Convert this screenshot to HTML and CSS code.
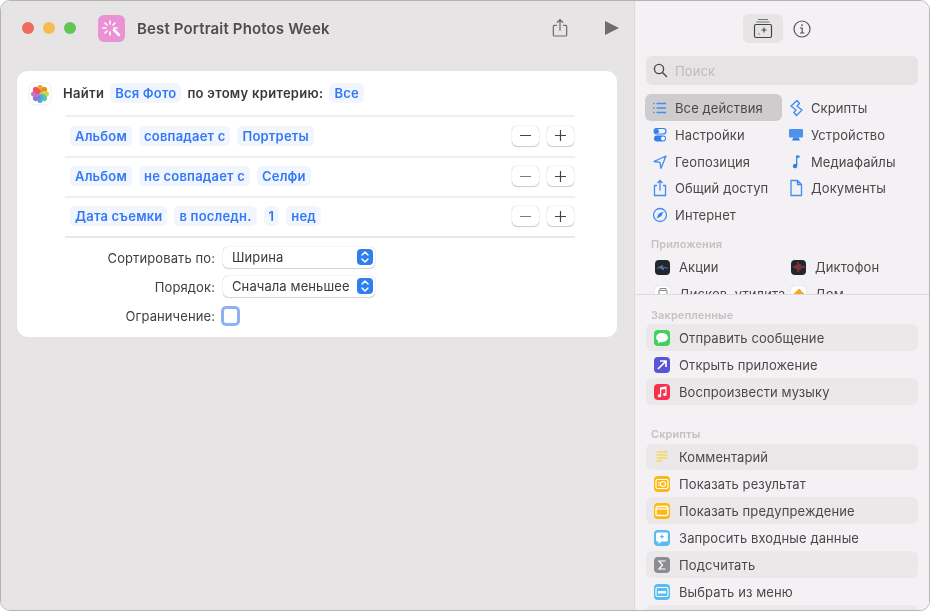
FILE: index.html
```html
<!DOCTYPE html><html lang="en">
<head>
  <meta charset="UTF-8">
  <meta name="viewport" content="width=device-width, initial-scale=1.0">
  <title>Best Portrait Photos Week</title>
  <link rel="stylesheet" href="styles.css">
</head>
<body>
  <div class="window">
    <div class="main">
      <div class="titlebar">
        <span class="light red"></span><span class="light yellow"></span><span class="light green"></span>
        <span class="app-icon">
          <svg width="27" height="27" viewBox="0 0 27 27" fill="none" stroke="#fff" stroke-width="1.6" stroke-linecap="round"><path d="M12 6v3M12 17v3M5 13h3M16 13h3M7 8l2 2M17 8l-2 2M7 18l2-2"/><path d="M16 15l5 5" stroke-width="2.6"/></svg>
        </span>
        <span class="doc-title">Best Portrait Photos Week</span>
        <span class="share">
          <svg width="16" height="20" viewBox="0 0 18 22" fill="none" stroke="#6f6d6e" stroke-width="1.4"><path d="M5.500 8H2.500a1 1 0 0 0-1 1v10a1 1 0 0 0 1 1h13a1 1 0 0 0 1-1V9a1 1 0 0 0-1-1h-3M9 14V2M5.500 5L9 1.500 12.500 5"/></svg>
        </span>
        <span class="play"></span>
      </div>

      <div class="card">
        <div class="find-row">
          <svg class="photos" width="24" height="24" viewBox="0 0 24 24">
            <rect x="1" y="1" width="22" height="22" rx="5" fill="#fff" stroke="#e4e2e3" stroke-width="0.6"/>
            <g style="mix-blend-mode:multiply">
              <ellipse cx="12" cy="7.200" rx="2.900" ry="4.200" fill="#f5a623"/>
              <ellipse cx="12" cy="7.200" rx="2.900" ry="4.200" fill="#f08a24" transform="rotate(45 12 12)"/>
              <ellipse cx="12" cy="7.200" rx="2.900" ry="4.200" fill="#c3d94a" transform="rotate(90 12 12)"/>
              <ellipse cx="12" cy="7.200" rx="2.900" ry="4.200" fill="#5cc6a0" transform="rotate(135 12 12)"/>
              <ellipse cx="12" cy="7.200" rx="2.900" ry="4.200" fill="#4aa8e0" transform="rotate(180 12 12)"/>
              <ellipse cx="12" cy="7.200" rx="2.900" ry="4.200" fill="#8b78d8" transform="rotate(225 12 12)"/>
              <ellipse cx="12" cy="7.200" rx="2.900" ry="4.200" fill="#c678c8" transform="rotate(270 12 12)"/>
              <ellipse cx="12" cy="7.200" rx="2.900" ry="4.200" fill="#e8556a" transform="rotate(315 12 12)"/>
            </g>
          </svg>
          <span class="strong">Найти</span>
          <span class="token">Вся Фото</span>
          <span class="strong">по этому критерию:</span>
          <span class="token">Все</span>
        </div>

        <div class="filter-row">
          <span class="token">Альбом</span><span class="token">совпадает с</span><span class="token">Портреты</span>
          <span class="stepper">
            <button class="step"><svg width="13" height="13" viewBox="0 0 13 13" stroke="#444" stroke-width="1.200"><path d="M1 6.500h11"/></svg></button>
            <button class="step"><svg width="13" height="13" viewBox="0 0 13 13" stroke="#444" stroke-width="1.200"><path d="M1 6.500h11M6.500 1v11"/></svg></button>
          </span>
        </div>
        <div class="filter-row">
          <span class="token">Альбом</span><span class="token">не совпадает с</span><span class="token">Селфи</span>
          <span class="stepper">
            <button class="step"><svg width="13" height="13" viewBox="0 0 13 13" stroke="#7d7b7c" stroke-width="1.200"><path d="M1 6.500h11"/></svg></button>
            <button class="step"><svg width="13" height="13" viewBox="0 0 13 13" stroke="#444" stroke-width="1.200"><path d="M1 6.500h11M6.500 1v11"/></svg></button>
          </span>
        </div>
        <div class="filter-row last">
          <span class="token">Дата съемки</span><span class="token">в последн.</span><span class="token">1</span><span class="token">нед</span>
          <span class="stepper">
            <button class="step"><svg width="13" height="13" viewBox="0 0 13 13" stroke="#7d7b7c" stroke-width="1.200"><path d="M1 6.500h11"/></svg></button>
            <button class="step"><svg width="13" height="13" viewBox="0 0 13 13" stroke="#444" stroke-width="1.200"><path d="M1 6.500h11M6.500 1v11"/></svg></button>
          </span>
        </div>

        <div class="options">
          <span class="opt-label">Сортировать по:</span>
          <span class="select">Ширина<span class="arrows"><svg width="10" height="14" viewBox="0 0 10 14" fill="none" stroke="#fff" stroke-width="1.500" stroke-linecap="round" stroke-linejoin="round"><path d="M2 5l3-3 3 3M2 9l3 3 3-3"/></svg></span></span>
          <span class="opt-label">Порядок:</span>
          <span class="select">Сначала меньшее<span class="arrows"><svg width="10" height="14" viewBox="0 0 10 14" fill="none" stroke="#fff" stroke-width="1.500" stroke-linecap="round" stroke-linejoin="round"><path d="M2 5l3-3 3 3M2 9l3 3 3-3"/></svg></span></span>
          <span class="opt-label">Ограничение:</span>
          <span class="check"></span>
        </div>
      </div>
    </div>

    <div class="sidebar">
      <div class="top-pane">
        <div class="tabs">
          <span class="tab active">
            <svg width="20" height="22" viewBox="0 0 20 22" fill="none" stroke="#444" stroke-width="1.200"><path d="M5 1.500h10M3.500 4h13" stroke="#777"/><rect x="1.500" y="6.500" width="17" height="13" rx="1.500"/><path d="M11 9.500v5M8.500 12h5M6 15.500v1M5.500 16h1" stroke-width="1.100"/></svg>
          </span>
          <span class="tab">
            <svg width="18" height="18" viewBox="0 0 18 18" fill="none" stroke="#555" stroke-width="1.200"><circle cx="9" cy="9" r="8"/><path d="M7 8h2.200v5M7 13h4.400"/><circle cx="9" cy="5.200" r="0.900" fill="#555" stroke="none"/></svg>
          </span>
        </div>
        <div class="search">
          <svg width="15" height="15" viewBox="0 0 15 15" fill="none" stroke="#4c4a4b" stroke-width="1.400"><circle cx="6" cy="6" r="4.600"/><path d="M9.500 9.500l4 4" stroke-linecap="round"/></svg>
          <span>Поиск</span>
        </div>
        <div class="cats">
          <div class="cat active">
            <svg class="ic" width="16" height="16" viewBox="0 0 16 16" fill="none" stroke="#3f8cf5" stroke-width="1.400"><path d="M4.500 3.500H14M4.500 8H14M4.500 12.500H14M1 3.500h1.400M1 8h1.400M1 12.500h1.400"/></svg>
            Все действия
          </div>
          <div class="cat">
            <svg class="ic" width="16" height="18" viewBox="0 0 16 18" fill="none" stroke="#3f8cf5" stroke-width="1.400" stroke-linejoin="round"><path d="M9 1.500L3 7l5 4-2 2.500 2.500 3L14 11 9 7l2.500-2.500z"/></svg>
            Скрипты
          </div>
          <div class="cat">
            <svg class="ic" width="16" height="14" viewBox="0 0 16 14"><rect x="2" y="0.500" width="12" height="5.500" rx="2.700" fill="none" stroke="#2f7ff0" stroke-width="1.200"/><circle cx="4.700" cy="3.200" r="2.200" fill="#2f7ff0"/><rect x="2" y="7.500" width="12" height="6" rx="3" fill="#2f7ff0"/><circle cx="11" cy="10.500" r="2" fill="#fff"/></svg>
            Настройки
          </div>
          <div class="cat">
            <svg class="ic" width="16" height="14" viewBox="0 0 16 14"><rect x="1" y="1" width="14" height="8.500" rx="1" fill="#4b93ee"/><path d="M5 9.500h6v2H5zM4 11.500h8v1H4z" fill="#2f7ff0"/></svg>
            Устройство
          </div>
          <div class="cat">
            <svg class="ic" width="16" height="16" viewBox="0 0 16 16" fill="none" stroke="#3f8cf5" stroke-width="1.300" stroke-linejoin="round"><path d="M14 2L2 7.500l6 .8 1 6z"/></svg>
            Геопозиция
          </div>
          <div class="cat">
            <svg class="ic" width="16" height="16" viewBox="0 0 16 16" fill="#2f7ff0"><path d="M8 1.500h3.500v2.200H9.300V12a2.200 2.200 0 1 1-1.300-2z"/></svg>
            Медиафайлы
          </div>
          <div class="cat">
            <svg class="ic" width="16" height="18" viewBox="0 0 16 18" fill="none" stroke="#3f8cf5" stroke-width="1.300"><path d="M5 6.500H2.500v10h11v-10H11M8 11.500V1.500M5.500 4L8 1.500 10.500 4"/></svg>
            Общий доступ
          </div>
          <div class="cat">
            <svg class="ic" width="16" height="18" viewBox="0 0 16 18" fill="none" stroke="#3f8cf5" stroke-width="1.300" stroke-linejoin="round"><path d="M3 1.500h6.500l4 4v11H3zM9.500 1.500v4h4"/></svg>
            Документы
          </div>
          <div class="cat">
            <svg class="ic" width="16" height="16" viewBox="0 0 16 16"><circle cx="8" cy="8" r="6.500" fill="none" stroke="#3f8cf5" stroke-width="1.300"/><path d="M11.500 4.500L9.200 9.200 4.500 11.500l2.300-4.700z" fill="#2f7ff0"/></svg>
            Интернет
          </div>
        </div>
        <div class="section-title apps-title">Приложения</div>
        <div class="cats">
          <div class="cat app">
            <span class="glyph dark"><svg width="14" height="14" viewBox="0 0 14 14" fill="none" stroke="#5b8fc9" stroke-width="0.800"><path d="M1 8h2l1-2 1 3 1-4 1 5 1-3 1 1h3"/></svg></span>
            Акции
          </div>
          <div class="cat app">
            <span class="glyph dark"><svg width="14" height="14" viewBox="0 0 14 14" fill="none" stroke="#e8404a" stroke-width="0.900"><path d="M1 7h2M4 5v4M6 2v10M8 4v6M10 6v2M11 7h2"/></svg></span>
            Диктофон
          </div>
          <div class="cat app">
            <span class="glyph pale"><svg width="14" height="14" viewBox="0 0 14 14" fill="none" stroke="#8a8889" stroke-width="1"><path d="M4 1.500h6v2H4zM3 3v9h8V3"/></svg></span>
            Дисков. утилита
          </div>
          <div class="cat app">
            <span class="glyph pale"><svg width="14" height="14" viewBox="0 0 14 14" fill="#f5a623"><path d="M7 1.500L1.500 7H3v5h8V7h1.500z"/></svg></span>
            Дом
          </div>
        </div>
      </div>

      <div class="bottom-pane">
        <div class="section-title">Закрепленные</div>
        <div class="action"><span class="glyph messages"><svg width="14" height="14" viewBox="0 0 14 14" fill="#fff"><path d="M7 2c3.300 0 6 2 6 4.600s-2.700 4.600-6 4.600c-.6 0-1.200-.1-1.700-.2L2.800 12.400l.6-2.300C2 9.300 1 8.100 1 6.600 1 4 3.700 2 7 2z"/></svg></span>Отправить сообщение</div>
        <div class="action"><span class="glyph indigo"><svg width="14" height="14" viewBox="0 0 14 14" fill="none" stroke="#fff" stroke-width="1.700"><path d="M3 11l7.500-7.500M5 3h6v6"/></svg></span>Открыть приложение</div>
        <div class="action"><span class="glyph music"><svg width="14" height="14" viewBox="0 0 14 14" fill="#fff"><path d="M5 2.500l6.500-1.200v8.200a1.700 1.500 0 1 1-1.200-1.400V4L6.200 4.800v6a1.700 1.500 0 1 1-1.200-1.400z"/></svg></span>Воспроизвести музыку</div>

        <div class="section-title scripts-title">Скрипты</div>
        <div class="action"><span class="glyph plain"><svg width="14" height="14" viewBox="0 0 14 14" stroke="#f9d65c" stroke-width="1.300"><path d="M1.500 2h11M1.500 5h11M1.500 8h11M1.500 11h6"/></svg></span>Комментарий</div>
        <div class="action"><span class="glyph amber"><svg width="14" height="14" viewBox="0 0 14 14" fill="none" stroke="#fff" stroke-width="1.200"><rect x="1" y="2.500" width="12" height="9" rx="1.500"/><circle cx="8" cy="7" r="2.500"/><path d="M3 5.500h2M3 8h2"/></svg></span>Показать результат</div>
        <div class="action"><span class="glyph amber"><svg width="14" height="14" viewBox="0 0 14 14" fill="none" stroke="#fff" stroke-width="1.300"><rect x="1" y="2.500" width="12" height="9" rx="1.500"/><path d="M1 5h12"/></svg></span>Показать предупреждение</div>
        <div class="action"><span class="glyph sky"><svg width="14" height="14" viewBox="0 0 14 14" fill="#fff"><path d="M2.500 1.500h9a1.500 1.500 0 0 1 1.500 1.500v6a1.500 1.500 0 0 1-1.500 1.500H6.500L3.500 13v-2.500h-1A1.500 1.500 0 0 1 1 9V3a1.500 1.500 0 0 1 1.500-1.500z"/><path d="M7 3.800v3.700M5.200 5.700h3.600" stroke="#4fb8f0" stroke-width="1.200"/></svg></span>Запросить входные данные</div>
        <div class="action"><span class="glyph gray"><svg width="14" height="14" viewBox="0 0 14 14" fill="none" stroke="#fff" stroke-width="1.200"><path d="M10.500 3H4l3.500 4L4 11h6.500"/></svg></span>Подсчитать</div>
        <div class="action"><span class="glyph sky"><svg width="14" height="14" viewBox="0 0 14 14" fill="none" stroke="#fff" stroke-width="1.100"><rect x="1" y="2.500" width="12" height="9" rx="1.500"/><rect x="3" y="6" width="8" height="2.500" fill="#fff" stroke="none"/></svg></span>Выбрать из меню</div>
        <div class="action"></div>
      </div>
    </div>
  </div>
</body>
</html>
```

FILE: styles.css
```css
html, body {
  margin: 0;
  padding: 0;
  background: #fff;
}
body {
  font-family: Inter, "Liberation Sans", sans-serif;
  font-size: 13px;
  letter-spacing: 0.1px;
  color: #3c3a3b;
  overflow: hidden;
}
.window {
  width: 930px;
  height: 611px;
  box-sizing: border-box;
  display: flex;
  border: 1px solid #b5b4b4;
  border-radius: 10px;
  overflow: hidden;
}
.main {
  width: 634px;
  background: #e6e4e5;
  border-right: 1px solid #dbd9da;
  box-sizing: border-box;
}
.titlebar {
  height: 70px;
  display: flex;
  align-items: center;
  padding: 0 14px 16px 21px;
  box-sizing: border-box;
}
.light {
  width: 12px;
  height: 12px;
  border-radius: 50%;
  margin-right: 9px;
}
.red { background: #ee6a5f; }
.yellow { background: #f5bd4f; }
.green { background: #61c454; margin-right: 0; }
.app-icon {
  width: 27px;
  height: 27px;
  margin-left: 22px;
  border-radius: 6px;
  background: #ea92d3;
}
.doc-title {
  margin-left: 12px;
  font-size: 15px;
  font-weight: 600;
  letter-spacing: 0.15px;
  color: #4f4d4e;
  flex: 1;
}
.share {
  margin-right: 37px;
  height: 20px;
}
.play {
  width: 0;
  height: 0;
  border-left: 14px solid #6f6d6e;
  border-top: 7.500px solid transparent;
  border-bottom: 7.500px solid transparent;
  margin-right: 1px;
}

.card {
  margin-left: 16px;
  width: 600px;
  height: 266px;
  background: #fff;
  border-radius: 11px;
  box-sizing: border-box;
  padding: 0 42px 0 48px;
}
.find-row {
  position: relative;
  height: 44px;
  margin-left: -2px;
  display: flex;
  align-items: center;
  gap: 6px;
  padding-bottom: 1px;
  box-sizing: border-box;
}
.photos {
  position: absolute;
  left: -35px;
  top: 11px;
}
.strong {
  font-weight: 600;
  color: #3a3839;
  font-size: 13px;
  letter-spacing: 0.3px;
}
.token {
  display: inline-block;
  height: 20px;
  line-height: 20px;
  padding: 0 5px;
  border-radius: 5px;
  background: #f1f6fe;
  color: #3478f6;
  font-weight: 600;
  font-size: 13px;
  letter-spacing: 0.2px;
  white-space: nowrap;
}
.filter-row {
  height: 41px;
  border-top: 2px solid #f0eff0;
  box-sizing: border-box;
  display: flex;
  align-items: center;
  gap: 7px;
  padding: 0 1px 2px 5px;
}
.filter-row + .filter-row {
  height: 40px;
}
.filter-row.last {
  height: 42px;
  border-bottom: 2px solid #e9e8e9;
}
.stepper {
  margin-left: auto;
  display: flex;
  gap: 8px;
}
.step {
  width: 27px;
  height: 20px;
  padding: 0;
  border: none;
  border-radius: 5px;
  background: #fff;
  box-shadow: 0 0 1px rgba(0,0,0,0.35), 0 1px 1px rgba(0,0,0,0.18);
  display: flex;
  align-items: center;
  justify-content: center;
}
.options {
  display: grid;
  grid-template-columns: 150px auto;
  grid-auto-rows: 29px;
  justify-content: start;
  align-items: center;
  column-gap: 8px;
  padding-top: 5px;
}
.opt-label {
  text-align: right;
  color: #3f3d3e;
}
.select {
  position: relative;
  display: block;
  width: 152px;
  height: 21px;
  line-height: 20px;
  padding-left: 9px;
  box-sizing: border-box;
  border-radius: 5px;
  background: #fff;
  box-shadow: 0 0 1px rgba(0,0,0,0.35), 0 1px 1px rgba(0,0,0,0.15);
  color: #3a3839;
  white-space: nowrap;
}
.arrows {
  position: absolute;
  right: 2px;
  top: 2px;
  width: 16px;
  height: 16px;
  border-radius: 4px;
  background: #2f7ff0;
  display: flex;
  align-items: center;
  justify-content: center;
}
.check {
  width: 13px;
  height: 14px;
  margin-left: -2px;
  border-radius: 5px;
  background: #fff;
  border: 3px solid #8fb0f2;
}

.sidebar {
  flex: 1;
  background: #f3f1f3;
  display: flex;
  flex-direction: column;
  min-width: 0;
}
.top-pane {
  height: 294px;
  overflow: hidden;
  flex: none;
  box-sizing: border-box;
  border-bottom: 1px solid #dddbdc;
  padding: 13px 11px 0 10px;
}
.tabs {
  display: flex;
  gap: 10px;
  padding-left: 98px;
  height: 29px;
}
.tab {
  width: 18px;
  height: 29px;
  display: flex;
  align-items: center;
  justify-content: center;
  border-radius: 6px;
}
.tab.active {
  width: 40px;
  background: #e6e4e5;
}
.search {
  margin: 13px 0 9px 1px;
  height: 29px;
  border-radius: 6px;
  background: #e5e3e4;
  display: flex;
  align-items: center;
  gap: 7px;
  padding-left: 7px;
  color: #bdbbbc;
}
.cats {
  display: grid;
  grid-template-columns: 136px 1fr;
  grid-auto-rows: 26.850px;
}
.cat {
  display: flex;
  align-items: center;
  box-sizing: border-box;
  padding: 1px 0 0 4px;
  white-space: nowrap;
  border-radius: 6px;
  color: #4a4849;
}
.cat.active {
  background: #cfcccd;
  margin-right: -1px;
}
.cat .ic {
  width: 22px;
  margin-right: 4px;
  flex: none;
}
.cat.app {
  padding-left: 10px;
}
.cat.app .glyph {
  width: 15px;
  height: 15px;
}
.section-title {
  font-size: 11px;
  font-weight: 600;
  color: #c4c2c3;
  height: 16px;
  line-height: 16px;
  padding-left: 6px;
}
.apps-title {
  margin-top: 8px;
  margin-bottom: 1px;
}
.bottom-pane {
  padding: 12px 11px 0 11px;
  flex: 1;
  overflow: hidden;
}
.bottom-pane .section-title {
  padding-left: 5px;
  margin-bottom: 1px;
}
.bottom-pane .scripts-title {
  margin-top: 21px;
  margin-bottom: 2px;
}
.action {
  height: 26.850px;
  box-sizing: border-box;
  display: flex;
  align-items: center;
  padding: 1px 0 0 8px;
  border-radius: 6px;
  color: #4a4849;
  white-space: nowrap;
}
.action:nth-of-type(even) {
  background: #ebe8ea;
}
.glyph {
  width: 16px;
  height: 16px;
  border-radius: 4px;
  display: inline-flex;
  align-items: center;
  justify-content: center;
  margin-right: 9px;
  flex: none;
}
.dark { background: #23262c; }
.pale { background: #fff; box-shadow: 0 0 1px rgba(0,0,0,0.3); }
.messages { background: #3fd15b; }
.indigo { background: #5856d6; }
.music { background: #f7324f; }
.plain { background: none; }
.amber { background: #fdb912; }
.sky { background: #55bdf2; }
.gray { background: #8e8d91; }
```
